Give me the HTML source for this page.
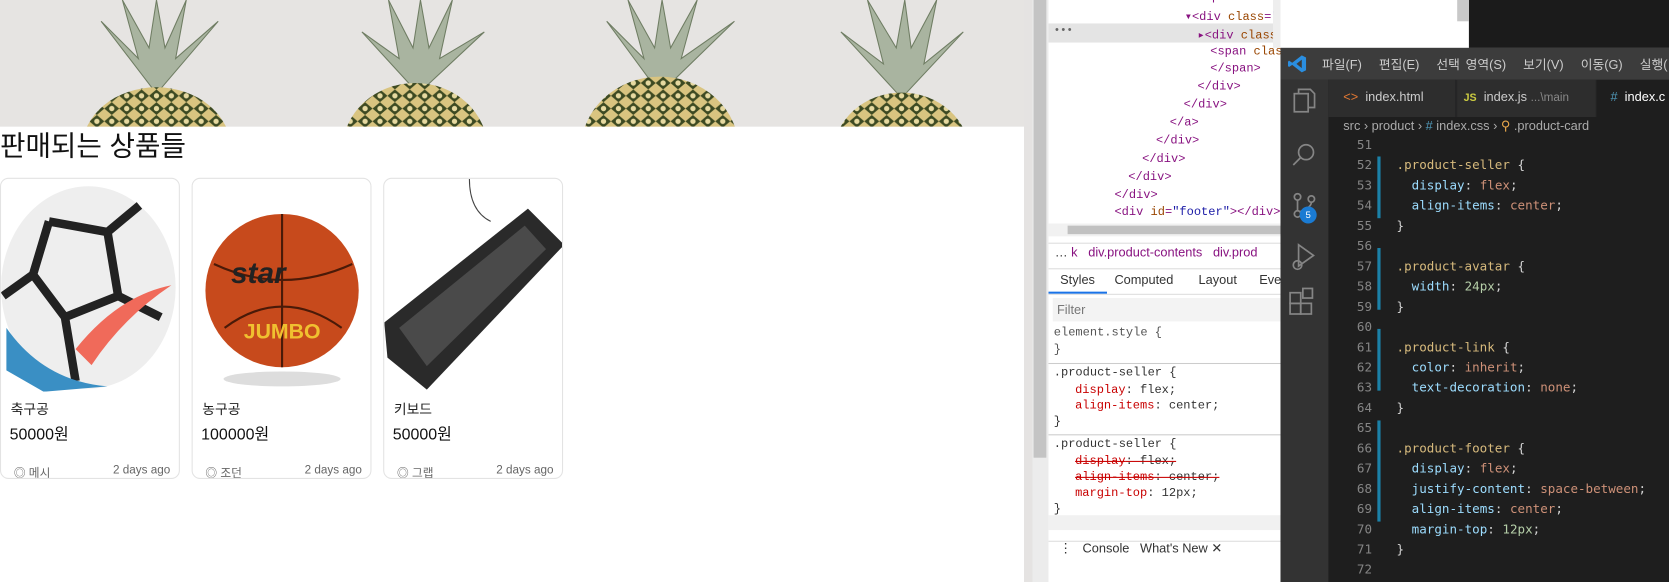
<!DOCTYPE html>
<html><head><meta charset="utf-8"><style>
*{margin:0;padding:0;box-sizing:border-box}
html,body{width:1669px;height:547px;overflow:hidden;background:#fff}
#w{position:absolute;left:0;top:0;width:1568px;height:514px;transform:scale(1.06442);transform-origin:0 0;font-family:"Liberation Sans","Noto Sans CJK KR",sans-serif}
.abs{position:absolute}
.card{position:absolute;top:167px;width:169px;height:283px;border:1px solid #e3e3e3;border-radius:8px;overflow:hidden;background:#fff}
.card .img{height:200px;position:relative;overflow:hidden}
.card .nm{position:absolute;left:9px;top:206px;font-size:13px;color:#222}
.card .pr{position:absolute;left:8px;top:229px;font-size:15px;color:#111}
.card .ft{position:absolute;left:12px;right:8px;top:268px;font-size:11px;color:#666;display:flex;justify-content:space-between}
.mono{font-family:"Liberation Mono","DejaVu Sans Mono",monospace;font-size:11.3px}
.dt{position:absolute;white-space:pre;color:#881280}
.dt .a{color:#994500}.dt .v{color:#1a1aa6}
.vs{font-family:"DejaVu Sans Mono","Liberation Mono",monospace;font-size:11.8px;white-space:pre}
.ln{position:absolute;left:1255px;width:34px;text-align:right;color:#858585}
.cd{position:absolute;left:1312px;color:#d4d4d4}
.s{color:#d7ba7d}.p{color:#9cdcfe}.v2{color:#ce9178}
</style></head><body><div id="w">
<div class="abs" style="left:0;top:0;width:962px;height:119px;background:#e6e4e2;overflow:hidden">
<svg width="962" height="119">
<defs>
<pattern id="pp" width="14" height="12" patternUnits="userSpaceOnUse"><rect width="14" height="12" fill="#d9c480"/><path d="M0 6 L7 0 L14 6 L7 12Z" fill="#3d4a22"/><circle cx="7" cy="6" r="2.5" fill="#e6d9a0"/></pattern>
</defs>
<g fill="#a9b4a0" stroke="#6f7d63" stroke-width="1">
<path d="M147 88 L95 20 L130 55 L115 0 L140 45 L147 0 L155 45 L175 0 L165 55 L205 20Z"/>
<path d="M393 88 L340 30 L375 55 L365 0 L388 45 L395 0 L403 45 L425 0 L413 55 L455 30Z"/>
<path d="M620 88 L570 20 L605 55 L590 0 L615 45 L622 0 L630 45 L655 0 L640 55 L690 20Z"/>
<path d="M847 92 L790 30 L830 60 L815 0 L842 45 L850 0 L856 45 L880 0 L868 60 L905 30Z"/>
</g>
<ellipse cx="147" cy="140" rx="70" ry="58" fill="url(#pp)"/>
<ellipse cx="390" cy="140" rx="68" ry="62" fill="url(#pp)"/>
<ellipse cx="620" cy="140" rx="74" ry="68" fill="url(#pp)"/>
<ellipse cx="847" cy="145" rx="64" ry="58" fill="url(#pp)"/>
</svg></div>
<div class="abs" style="left:0;top:120px;font-size:26px;color:#111;line-height:34px">판매되는 상품들</div>

<div class="card" style="left:0">
<div class="img"><svg width="169" height="200"><ellipse cx="82" cy="102" rx="82" ry="95" fill="#eeeeee"/><path d="M45 40 L100 50 L130 25 M100 50 L110 110 L60 130 L30 90 L45 40 M110 110 L150 130 M60 130 L70 190 M30 90 L2 110" fill="none" stroke="#222" stroke-width="8"/><path d="M5 140 Q40 190 100 195 L40 200 L5 180Z" fill="#3a8fc4"/><path d="M70 160 Q110 110 160 100 Q115 130 85 175Z" fill="#f06a5a"/></svg></div>
<div class="nm">축구공</div><div class="pr">50000원</div><div class="ft"><span>◎ 메시</span><span>2 days ago</span></div></div>
<div class="card" style="left:180px">
<div class="img"><svg width="169" height="200"><ellipse cx="84" cy="188" rx="55" ry="7" fill="#ddd"/><circle cx="84" cy="105" r="72" fill="#c74a1c"/><path d="M20 80 Q84 110 150 80 M84 33 V177 M30 140 Q84 100 140 140" stroke="#4a1a08" stroke-width="2" fill="none"/><text x="36" y="98" font-size="28" font-weight="bold" font-style="italic" fill="#222">star</text><text x="48" y="150" font-size="20" font-weight="bold" fill="#f0c030">JUMBO</text></svg></div>
<div class="nm">농구공</div><div class="pr">100000원</div><div class="ft"><span>◎ 조던</span><span>2 days ago</span></div></div>
<div class="card" style="left:360px">
<div class="img"><svg width="169" height="200"><path d="M80 0 Q80 30 100 40" stroke="#444" fill="none"/><path d="M0 135 L135 28 L169 62 L40 198 L3 168Z" fill="#2a2a2a"/><path d="M14 140 L132 44 L152 66 L40 176Z" fill="#4a4a4a"/></svg></div>
<div class="nm">키보드</div><div class="pr">50000원</div><div class="ft"><span>◎ 그랩</span><span>2 days ago</span></div></div>

<div class="abs" style="left:962px;top:0;width:8px;height:547px;background:#e5e3e2"></div>
<div class="abs" style="left:970px;top:0;width:15px;height:547px;background:#ececec"></div>
<div class="abs" style="left:971px;top:0;width:12px;height:430px;background:#c4c4c4"></div>

<div class="abs" style="left:985px;top:0;width:218px;height:547px;background:#fff;overflow:hidden">
<div class="abs" style="left:0;top:22px;width:218px;height:18px;background:#e4e4e4"></div>
<div class="abs mono" style="left:5px;top:24px;color:#666;font-size:10px">•••</div>
<div class="mono">
<div class="dt" style="left:140px;top:-8px">&lt;span class="product-price"&gt;</div>
<div class="dt" style="left:128px;top:9px">▾&lt;div <span class="a">class</span>=<span class="v">"product-footer"</span>&gt;</div>
<div class="dt" style="left:140px;top:26px">▸&lt;div <span class="a">class</span>=<span class="v">"product-seller"</span>&gt;…</div>
<div class="dt" style="left:152px;top:43px">&lt;span <span class="a">clas</span></div>
<div class="dt" style="left:152px;top:59px">&lt;/span&gt;</div>
<div class="dt" style="left:140px;top:76px">&lt;/div&gt;</div>
<div class="dt" style="left:127px;top:93px">&lt;/div&gt;</div>
<div class="dt" style="left:114px;top:110px">&lt;/a&gt;</div>
<div class="dt" style="left:101px;top:127px">&lt;/div&gt;</div>
<div class="dt" style="left:88px;top:144px">&lt;/div&gt;</div>
<div class="dt" style="left:75px;top:161px">&lt;/div&gt;</div>
<div class="dt" style="left:62px;top:178px">&lt;/div&gt;</div>
<div class="dt" style="left:62px;top:194px">&lt;div <span class="a">id</span>=<span class="v">"footer"</span>&gt;&lt;/div&gt;</div>
</div>
<div class="abs" style="left:0;top:210px;width:218px;height:12px;background:#f1f1f1"></div>
<div class="abs" style="left:18px;top:212px;width:200px;height:8px;background:#c1c1c1"></div>
<div class="abs" style="left:0;top:228px;width:218px;height:1px;background:#ddd"></div>
<div class="abs" style="left:6px;top:230px;font-size:12px;color:#333;white-space:nowrap">… <span style="color:#881280">k</span> &nbsp; <span style="color:#881280">div.product-contents &nbsp; div.prod</span></div>
<div class="abs" style="left:0;top:252px;width:218px;height:1px;background:#ddd"></div>
<div class="abs" style="left:11px;top:256px;font-size:12px;color:#333">Styles</div>
<div class="abs" style="left:62px;top:256px;font-size:12px;color:#333">Computed</div>
<div class="abs" style="left:141px;top:256px;font-size:12px;color:#333">Layout</div>
<div class="abs" style="left:198px;top:256px;font-size:12px;color:#333">Eve</div>
<div class="abs" style="left:0;top:274px;width:55px;height:2px;background:#1a73e8"></div>
<div class="abs" style="left:0;top:276px;width:218px;height:1px;background:#ddd"></div>
<div class="abs" style="left:4px;top:280px;width:214px;height:22px;background:#f3f3f3"></div>
<div class="abs" style="left:8px;top:284px;font-size:12px;color:#777">Filter</div>
<div class="mono" style="color:#333">
<div class="dt" style="left:5px;top:307px;color:#555">element.style {</div>
<div class="dt" style="left:5px;top:323px;color:#555">}</div>
<div class="abs" style="left:0;top:341px;width:218px;height:1px;background:#ccc"></div>
<div class="dt" style="left:5px;top:345px;color:#333">.product-seller {</div>
<div class="dt" style="left:25px;top:361px;color:#c80000">display<span style="color:#333">: flex;</span></div>
<div class="dt" style="left:25px;top:376px;color:#c80000">align-items<span style="color:#333">: center;</span></div>
<div class="dt" style="left:5px;top:391px;color:#333">}</div>
<div class="abs" style="left:0;top:408px;width:218px;height:1px;background:#ccc"></div>
<div class="dt" style="left:5px;top:412px;color:#333">.product-seller {</div>
<div class="dt" style="left:25px;top:428px;color:#c80000;text-decoration:line-through">display<span style="color:#333">: flex;</span></div>
<div class="dt" style="left:25px;top:443px;color:#c80000;text-decoration:line-through">align-items<span style="color:#333">: center;</span></div>
<div class="dt" style="left:25px;top:458px;color:#c80000">margin-top<span style="color:#333">: 12px;</span></div>
<div class="dt" style="left:5px;top:473px;color:#333">}</div>
</div>
<div class="abs" style="left:0;top:484px;width:218px;height:14px;background:#f1f1f1"></div>
<div class="abs" style="left:0;top:508px;width:218px;height:1px;background:#ddd"></div>
<div class="abs" style="left:10px;top:508px;font-size:12px;color:#333;white-space:nowrap">⋮ &nbsp; Console &nbsp; What's New ✕</div>
</div>
<div class="abs" style="left:1196px;top:0;width:7px;height:45px;background:#eee"></div>
<div class="abs" style="left:1380px;top:0;width:289px;height:45px;background:#1b1b1b"></div>
<div class="abs" style="left:1369px;top:0;width:11px;height:20px;background:#c8c8c8"></div>

<div class="abs" style="left:1203px;top:45px;width:466px;height:502px;background:#1e1e1e"></div>
<div class="abs" style="left:1203px;top:45px;width:466px;height:30px;background:#3c3c3c"></div>
<svg class="abs" style="left:1210px;top:51px" width="18" height="18" viewBox="0 0 18 18"><path d="M13 1 L17 3 V15 L13 17 L4 10 L1 12 L0 11 V7 L1 6 L4 8 L13 1Z M13 5 L8 9 L13 13Z" fill="#2a8ee0"/></svg>
<div class="abs" style="left:1242px;top:52px;font-size:12px;color:#ccc;white-space:nowrap;word-spacing:2px">파일(F) &nbsp; 편집(E) &nbsp; 선택 영역(S) &nbsp; 보기(V) &nbsp; 이동(G) &nbsp; 실행(</div>
<div class="abs" style="left:1203px;top:75px;width:45px;height:472px;background:#333"></div>
<svg class="abs" style="left:1203px;top:75px" width="45" height="260" fill="none" stroke="#858585" stroke-width="1.6">
<rect x="13" y="13" width="13" height="17"/><path d="M17 13 V9 H28 L32 13 V26 H26"/>
<circle cx="24" cy="68" r="7"/><path d="M19 73 L12 80"/>
<circle cx="16" cy="110" r="3"/><circle cx="29" cy="112" r="3"/><circle cx="16" cy="126" r="3"/><path d="M16 113 V123 M29 115 Q29 120 18 124"/>
<path d="M17 155 L31 165 L17 175Z"/><circle cx="16" cy="174" r="4"/>
<rect x="9" y="210" width="10" height="10"/><rect x="19" y="210" width="10" height="10"/><rect x="9" y="200" width="10" height="10"/><rect x="21" y="196" width="9" height="9"/>
</svg>
<div class="abs" style="left:1221px;top:194px;width:16px;height:16px;border-radius:8px;background:#1a7bd3;color:#fff;font-size:9px;text-align:center;line-height:16px">5</div>
<div class="abs" style="left:1248px;top:75px;width:421px;height:35px;background:#252526"></div>
<div class="abs" style="left:1248px;top:75px;width:120px;height:35px;background:#2d2d2d;border-right:1px solid #252526"></div>
<div class="abs" style="left:1369px;top:75px;width:130px;height:35px;background:#2d2d2d"></div>
<div class="abs" style="left:1500px;top:75px;width:169px;height:35px;background:#1e1e1e"></div>
<div class="abs" style="left:1262px;top:84px;font-size:12px;color:#ccc;white-space:nowrap"><span style="color:#e37933">&lt;&gt;</span> &nbsp;index.html</div>
<div class="abs" style="left:1375px;top:84px;font-size:12px;color:#ccc;white-space:nowrap"><span style="color:#cbcb41;font-weight:bold;font-size:10px">JS</span> &nbsp;index.js <span style="color:#888;font-size:11px">...\main</span></div>
<div class="abs" style="left:1513px;top:84px;font-size:12px;color:#fff;white-space:nowrap"><span style="color:#519aba">#</span> &nbsp;index.c</div>
<div class="abs" style="left:1262px;top:110px;font-size:12px;color:#aaa;white-space:nowrap;line-height:16px">src › product › <span style="color:#519aba">#</span> index.css › <span style="color:#e9a84c">⚲</span> .product-card</div>
<div class="vs">
<div class="ln" style="top:129px">51</div>
<div class="ln" style="top:148px">52</div><div class="cd" style="top:148px"><span class="s">.product-seller</span> {</div>
<div class="ln" style="top:167px">53</div><div class="cd" style="top:167px">  <span class="p">display</span>: <span class="v2">flex</span>;</div>
<div class="ln" style="top:186px">54</div><div class="cd" style="top:186px">  <span class="p">align-items</span>: <span class="v2">center</span>;</div>
<div class="ln" style="top:205px">55</div><div class="cd" style="top:205px">}</div>
<div class="ln" style="top:224px">56</div>
<div class="ln" style="top:243px">57</div><div class="cd" style="top:243px"><span class="s">.product-avatar</span> {</div>
<div class="ln" style="top:262px">58</div><div class="cd" style="top:262px">  <span class="p">width</span>: <span style="color:#b5cea8">24px</span>;</div>
<div class="ln" style="top:281px">59</div><div class="cd" style="top:281px">}</div>
<div class="ln" style="top:300px">60</div>
<div class="ln" style="top:319px">61</div><div class="cd" style="top:319px"><span class="s">.product-link</span> {</div>
<div class="ln" style="top:338px">62</div><div class="cd" style="top:338px">  <span class="p">color</span>: <span class="v2">inherit</span>;</div>
<div class="ln" style="top:357px">63</div><div class="cd" style="top:357px">  <span class="p">text-decoration</span>: <span class="v2">none</span>;</div>
<div class="ln" style="top:376px">64</div><div class="cd" style="top:376px">}</div>
<div class="ln" style="top:395px">65</div>
<div class="ln" style="top:414px">66</div><div class="cd" style="top:414px"><span class="s">.product-footer</span> {</div>
<div class="ln" style="top:433px">67</div><div class="cd" style="top:433px">  <span class="p">display</span>: <span class="v2">flex</span>;</div>
<div class="ln" style="top:452px">68</div><div class="cd" style="top:452px">  <span class="p">justify-content</span>: <span class="v2">space-between</span>;</div>
<div class="ln" style="top:471px">69</div><div class="cd" style="top:471px">  <span class="p">align-items</span>: <span class="v2">center</span>;</div>
<div class="ln" style="top:490px">70</div><div class="cd" style="top:490px">  <span class="p">margin-top</span>: <span style="color:#b5cea8">12px</span>;</div>
<div class="ln" style="top:509px">71</div><div class="cd" style="top:509px">}</div>
<div class="ln" style="top:528px">72</div>
</div>
<div class="abs" style="left:1294px;top:147px;width:3px;height:58px;background:#1b81a8"></div>
<div class="abs" style="left:1294px;top:233px;width:3px;height:58px;background:#1b81a8"></div>
<div class="abs" style="left:1294px;top:309px;width:3px;height:58px;background:#1b81a8"></div>
<div class="abs" style="left:1294px;top:395px;width:3px;height:95px;background:#1b81a8"></div>
</div></body></html>
